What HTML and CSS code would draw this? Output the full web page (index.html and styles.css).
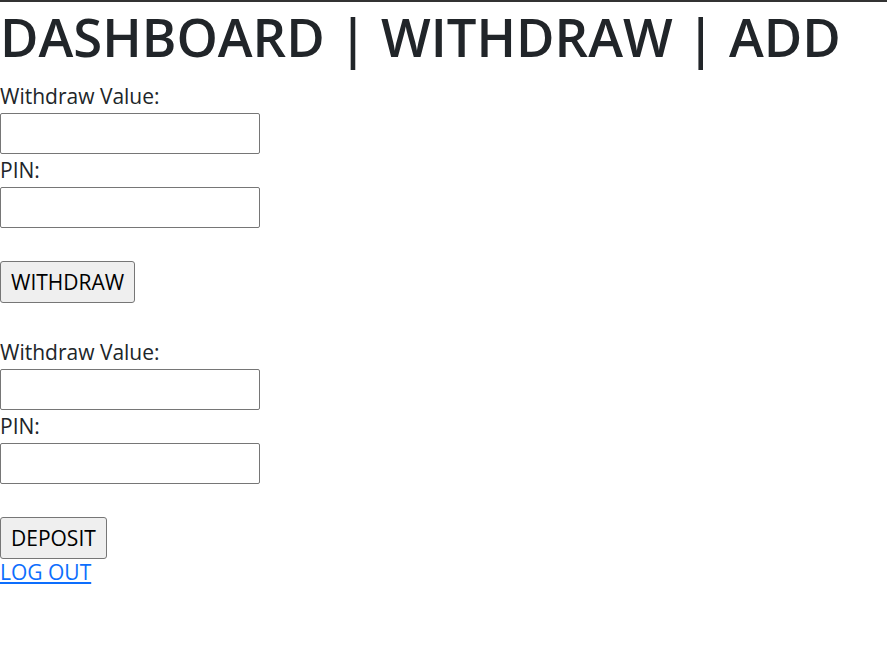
FILE: index.html
```html
<!DOCTYPE html>
<html lang="en">
<head>
<meta charset="utf-8">
<title>Dashboard</title>
<link rel="stylesheet" href="styles.css">
</head>
<body>
<div class="page">
  <h1 class="title">DASHBOARD | WITHDRAW | ADD</h1>
  <form class="form form-withdraw">
    <label class="label" for="w-value">Withdraw Value:</label>
    <input class="field" id="w-value" type="text">
    <label class="label" for="w-pin">PIN:</label>
    <input class="field" id="w-pin" type="password">
    <button class="btn" type="button">WITHDRAW</button>
  </form>
  <form class="form form-deposit">
    <label class="label" for="d-value">Withdraw Value:</label>
    <input class="field" id="d-value" type="text">
    <label class="label" for="d-pin">PIN:</label>
    <input class="field" id="d-pin" type="password">
    <button class="btn" type="button">DEPOSIT</button>
  </form>
  <a class="logout" href="#">LOG OUT</a>
</div>
</body>
</html>
```
FILE: styles.css
```css
html, body {
  margin: 0;
  padding: 0;
  background: #fff;
}
.page {
  border-top: 2px solid #333;
  font-family: "Open Sans", "Noto Sans", sans-serif;
  color: #212529;
  font-size: 21px;
  line-height: 33px;
  display: flex;
  flex-direction: column;
  align-items: flex-start;
}
.title {
  margin: 4px 0 12px 0;
  font-size: 52.6px;
  line-height: 62px;
  font-weight: 600;
  color: #212529;
  white-space: nowrap;
}
.form {
  display: flex;
  flex-direction: column;
  align-items: flex-start;
  margin: 0;
}
.form-withdraw {
  margin-bottom: 33px;
}
.label {
  display: block;
  height: 33px;
}
.field {
  box-sizing: border-box;
  width: 260px;
  height: 41px;
  margin: 0;
  border: 1px solid #767676;
  border-radius: 2px;
  background: #fff;
  font: inherit;
  padding: 0 4px;
}
.btn {
  box-sizing: border-box;
  height: 42px;
  margin-top: 33px;
  padding: 0 10px;
  border: 1px solid #767676;
  border-radius: 3px;
  background: #efefef;
  color: #000;
  font-family: inherit;
  font-size: 21px;
  line-height: 1;
}
.logout {
  color: #0d6efd;
  text-decoration: underline;
  font-size: 21px;
  line-height: 26px;
}
```
